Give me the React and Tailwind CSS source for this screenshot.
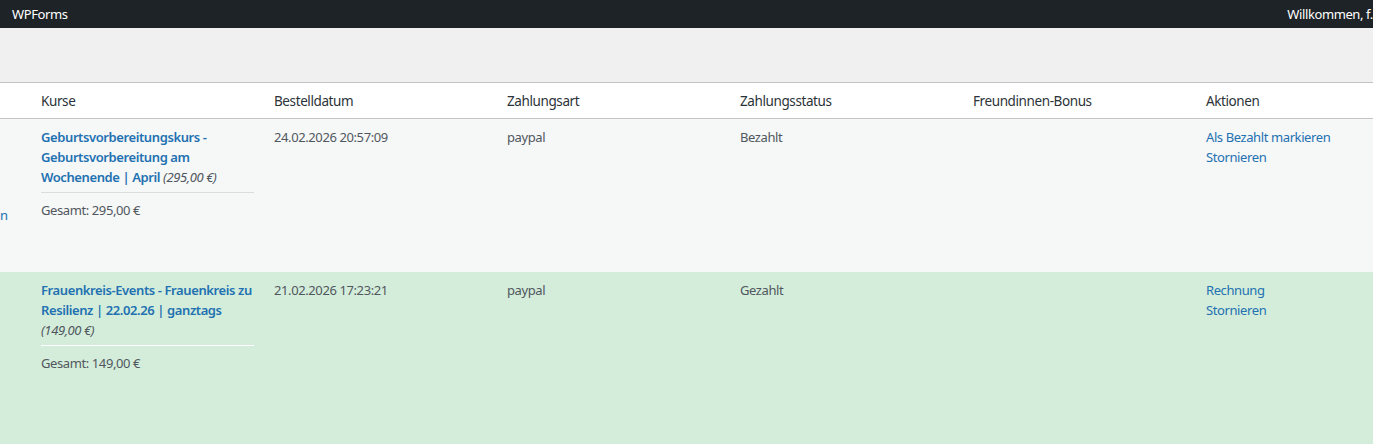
const columns = ["Kurse", "Bestelldatum", "Zahlungsart", "Zahlungsstatus", "Freundinnen-Bonus", "Aktionen"];

const orders = [
  {
    id: 1,
    lead: "n",
    course: "Geburtsvorbereitungskurs - Geburtsvorbereitung am Wochenende | April",
    price: "(295,00 €)",
    total: "Gesamt: 295,00 €",
    date: "24.02.2026 20:57:09",
    method: "paypal",
    status: "Bezahlt",
    actions: ["Als Bezahlt markieren", "Stornieren"],
    rowClass: "bg-[#f6f7f7] h-[153px]",
    hrClass: "border-[#dcdcde]",
  },
  {
    id: 2,
    lead: "",
    course: "Frauenkreis-Events - Frauenkreis zu Resilienz | 22.02.26 | ganztags",
    price: "(149,00 €)",
    total: "Gesamt: 149,00 €",
    date: "21.02.2026 17:23:21",
    method: "paypal",
    status: "Gezahlt",
    actions: ["Rechnung", "Stornieren"],
    rowClass: "bg-[#d4edda] h-[172px]",
    hrClass: "border-white",
  },
];

export default function App() {
  return (
    <div
      className="w-[1373px] h-[444px] overflow-hidden bg-[#f0f0f1] text-[13px] leading-[20px] tracking-[-0.4px] text-[#50575e]"
      style={{ fontFamily: '"Noto Sans", "Open Sans", Arial, sans-serif' }}
    >
      {/* Admin bar */}
      <div className="h-[28px] bg-[#1d2327] text-white flex items-center justify-between pl-[12px] whitespace-nowrap overflow-hidden">
        <span>WPForms</span>
        <span className="-mr-[4px]">Willkommen, f.f</span>
      </div>

      <div className="h-[54px]" />

      {/* Bestellungen */}
      <table className="table-fixed border-collapse bg-white w-[1429px]">
        <colgroup>
          <col className="w-[31px]" />
          {columns.map((c) => (
            <col key={c} className="w-[233px]" />
          ))}
        </colgroup>
        <thead>
          <tr className="h-[36px] border-y border-[#c3c4c7]">
            <th />
            {columns.map((c) => (
              <th key={c} className="px-[10px] text-left font-normal text-[#2c3338] text-[13.5px]">
                {c}
              </th>
            ))}
          </tr>
        </thead>
        <tbody>
          {orders.map((o) => (
            <tr key={o.id} className={o.rowClass}>
              <td className="align-top text-right text-[#2271b1] pt-[86px] pr-[25px] overflow-hidden">{o.lead}</td>
              <td className="align-top px-[10px] py-[8px]">
                <a href="#" className="text-[#2271b1] font-semibold">
                  {o.course}
                </a>{" "}
                <em className="text-[#50575e]">{o.price}</em>
                <hr className={`mt-[5px] mb-[7px] border-t ${o.hrClass}`} />
                <div>{o.total}</div>
              </td>
              <td className="align-top px-[10px] py-[8px]">{o.date}</td>
              <td className="align-top px-[10px] py-[8px]">{o.method}</td>
              <td className="align-top px-[10px] py-[8px]">{o.status}</td>
              <td className="align-top px-[10px] py-[8px]" />
              <td className="align-top px-[10px] py-[8px]">
                {o.actions.map((a) => (
                  <a key={a} href="#" className="block text-[#2271b1]">
                    {a}
                  </a>
                ))}
              </td>
            </tr>
          ))}
        </tbody>
      </table>
    </div>
  );
}
